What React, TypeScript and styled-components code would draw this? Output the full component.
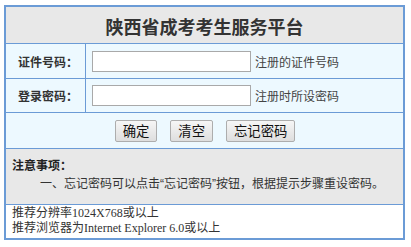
import React from "react";
import styled, { createGlobalStyle } from "styled-components";

const Global = createGlobalStyle`
  html, body { margin: 0; padding: 0; background: #fff; }
  body { font-family: "Noto Sans CJK SC", "Noto Sans", sans-serif; color: #333; }
`;

const Page = styled.div`
  padding: 5px 0 0 4px;
`;

const Panel = styled.div`
  width: 401px;
  box-sizing: border-box;
  border: 2px solid #6b9bd6;
  display: flex;
  flex-direction: column;
`;

const Header = styled.div`
  height: 36px;
  background: #e8e8e8;
  display: flex;
  align-items: center;
  justify-content: center;
  font-size: 18px;
  font-weight: bold;
  color: #333;
  padding-top: 2px;
  box-sizing: border-box;
`;

const FieldRow = styled.div<{ $h: number }>`
  display: grid;
  grid-template-columns: 80px 1fr;
  height: ${(p) => p.$h}px;
  border-top: 1px solid #6b9bd6;
  background: #edf9ff;
`;

const Label = styled.div`
  border-right: 1px solid #6b9bd6;
  display: flex;
  align-items: center;
  justify-content: center;
  font-size: 12px;
  font-weight: bold;
  color: #333;
  padding-left: 5px;
`;

const Value = styled.div`
  display: flex;
  align-items: center;
  padding-left: 6px;
`;

const Input = styled.input`
  width: 159px;
  height: 21px;
  box-sizing: border-box;
  border: 1px solid #a9a9a9;
  background: #fff;
  margin: 0;
  padding: 0 2px;
`;

const Hint = styled.span`
  margin-left: 4px;
  font-size: 12px;
  color: #444;
`;

const ButtonRow = styled.div`
  height: 35px;
  border-top: 1px solid #6b9bd6;
  background: #edf9ff;
  display: flex;
  align-items: center;
  justify-content: center;
  gap: 13px;
  padding-left: 1px;
`;

const Button = styled.button`
  height: 22px;
  padding: 0 7px;
  box-sizing: border-box;
  font-family: "Noto Sans CJK SC", sans-serif;
  font-size: 13.33px;
  color: #111;
  border: 1px solid #adadad;
  border-radius: 2px;
  background: linear-gradient(#f6f6f6, #dedede);
  line-height: 1;
`;

const Notice = styled.div`
  height: 56px;
  box-sizing: border-box;
  border-top: 1px solid #6b9bd6;
  background: #e8e8e8;
  padding: 7px 6px 0 6px;
  font-size: 12px;
  line-height: 18px;
`;

const NoticeTitle = styled.div`
  font-weight: bold;
  color: #222;
`;

const NoticeItem = styled.div`
  padding-left: 28px;
  color: #333;
  white-space: nowrap;
`;

const Quote = styled.span`
  font-family: "Liberation Sans", sans-serif;
`;

const Footer = styled.div`
  height: 34px;
  box-sizing: border-box;
  border-top: 1px solid #6b9bd6;
  background: #fff;
  padding: 1px 6px 0;
  font-family: "Liberation Serif", "Noto Sans CJK SC", serif;
  font-size: 12px;
  line-height: 15px;
  color: #333;
`;

export default function App() {
  return (
    <Page>
      <Global />
      <Panel>
        <Header>陕西省成考考生服务平台</Header>
        <FieldRow $h={34}>
          <Label>证件号码：</Label>
          <Value>
            <Input type="text" />
            <Hint>注册的证件号码</Hint>
          </Value>
        </FieldRow>
        <FieldRow $h={33}>
          <Label>登录密码：</Label>
          <Value>
            <Input type="password" />
            <Hint>注册时所设密码</Hint>
          </Value>
        </FieldRow>
        <ButtonRow>
          <Button>确定</Button>
          <Button>清空</Button>
          <Button>忘记密码</Button>
        </ButtonRow>
        <Notice>
          <NoticeTitle>注意事项：</NoticeTitle>
          <NoticeItem>
            一、忘记密码可以点击<Quote>“</Quote>忘记密码<Quote>”</Quote>按钮，根据提示步骤重设密码。
          </NoticeItem>
        </Notice>
        <Footer>
          <div>推荐分辨率1024X768或以上</div>
          <div>推荐浏览器为Internet Explorer 6.0或以上</div>
        </Footer>
      </Panel>
    </Page>
  );
}
